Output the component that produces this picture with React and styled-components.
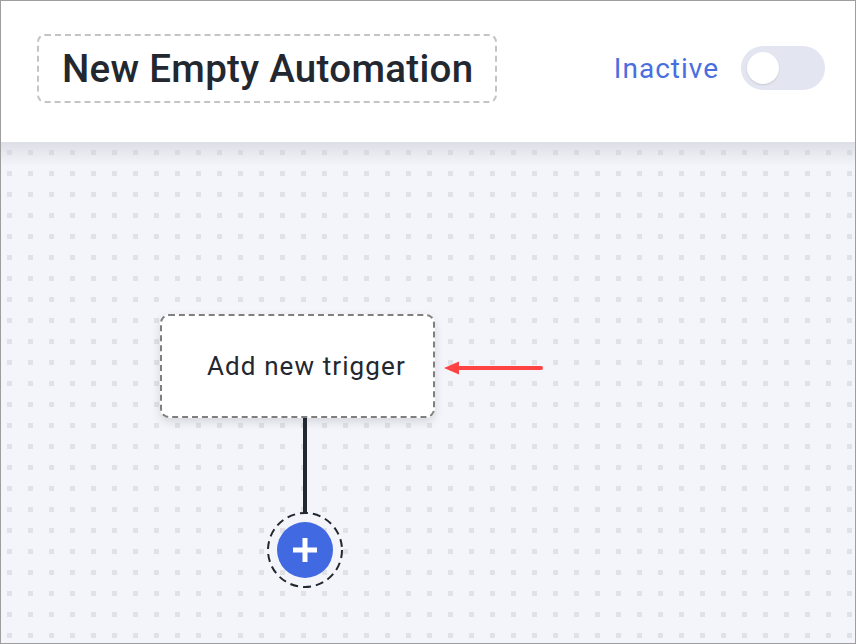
import React from 'react';
import styled, { createGlobalStyle } from 'styled-components';

const GlobalStyle = createGlobalStyle`
  * { box-sizing: border-box; }
  html, body { margin: 0; padding: 0; background: #ffffff; }
  body { font-family: Roboto, "Liberation Sans", sans-serif; }
`;

const Frame = styled.div`
  width: 856px;
  height: 644px;
  border: 1px solid #9e9e9e;
  display: flex;
  flex-direction: column;
  overflow: hidden;
  background: #ffffff;
`;

const Header = styled.header`
  height: 141px;
  flex-shrink: 0;
  display: flex;
  align-items: center;
  justify-content: space-between;
  padding: 0 30px 7px 36px;
  background: #ffffff;
  position: relative;
  z-index: 1;
`;

const TitleBox = styled.div`
  border: 2px dashed #c4c4c4;
  border-radius: 8px;
  height: 69px;
  padding: 0 22px 0 23px;
  display: flex;
  align-items: center;
  font-size: 38.5px;
  font-weight: 500;
  color: #23272f;
  letter-spacing: 0.3px;
`;

const StatusGroup = styled.div`
  display: flex;
  align-items: center;
  gap: 22px;
`;

const StatusLabel = styled.span`
  font-size: 28px;
  color: #4a6ee0;
  letter-spacing: 1px;
`;

const Toggle = styled.div`
  width: 84px;
  height: 44px;
  border-radius: 22px;
  background: #e3e5f0;
  padding: 6px;
  display: flex;
  align-items: center;
  justify-content: ${({ $on }) => ($on ? 'flex-end' : 'flex-start')};
`;

const Knob = styled.div`
  width: 32px;
  height: 32px;
  border-radius: 50%;
  background: #ffffff;
  box-shadow: 0 1px 2px rgba(0, 0, 0, 0.12);
`;

const Canvas = styled.main`
  flex: 1;
  position: relative;
  background:
    linear-gradient(to bottom, rgba(198, 200, 210, 0.5), rgba(198, 200, 210, 0) 24px) no-repeat,
    conic-gradient(from 0deg at 5px 5px, #f4f5fa 0 75%, #e1e2e8 0) 0 0 / 21px 21px;
  background-position: 0 0, 6px 8px;
`;

const TriggerCard = styled.div`
  position: absolute;
  left: 159px;
  top: 172px;
  width: 275px;
  height: 104px;
  background: #ffffff;
  border: 2px dashed #7f7f7f;
  border-radius: 9px;
  box-shadow: 0 4px 10px rgba(0, 0, 0, 0.12);
  display: flex;
  align-items: center;
  padding-left: 45px;
  font-size: 26px;
  color: #23272f;
  letter-spacing: 1.1px;
  cursor: pointer;
`;

const Connector = styled.div`
  position: absolute;
  left: 302px;
  top: 276px;
  width: 4px;
  height: 96px;
  background: #222831;
`;

const AddRing = styled.div`
  position: absolute;
  left: 265px;
  top: 369px;
  width: 78px;
  height: 78px;
  border-radius: 50%;
  display: flex;
  align-items: center;
  justify-content: center;
`;

const AddButton = styled.button`
  width: 56px;
  height: 56px;
  border-radius: 50%;
  border: none;
  padding: 0;
  background: #4169e1;
  display: flex;
  align-items: center;
  justify-content: center;
  cursor: pointer;
  position: relative;
`;

const Pointer = styled.svg`
  position: absolute;
  left: 441px;
  top: 216px;
`;

export default function App() {
  return (
    <>
      <GlobalStyle />
      <Frame>
        <Header>
          <TitleBox>New Empty Automation</TitleBox>
          <StatusGroup>
            <StatusLabel>Inactive</StatusLabel>
            <Toggle $on={false}>
              <Knob />
            </Toggle>
          </StatusGroup>
        </Header>
        <Canvas>
          <TriggerCard>Add new trigger</TriggerCard>
          <Connector />
          <AddRing>
            <svg width="78" height="78" viewBox="0 0 78 78" style={{ position: 'absolute', inset: 0 }}>
              <circle cx="39" cy="39" r="37" fill="none" stroke="#222831" strokeWidth="2" strokeDasharray="8 5" />
            </svg>
            <AddButton aria-label="Add step">
              <svg width="28" height="28" viewBox="0 0 28 28">
                <path d="M14 2v24M2 14h24" stroke="#ffffff" strokeWidth="5" />
              </svg>
            </AddButton>
          </AddRing>
          <Pointer width="104" height="20" viewBox="0 0 104 20">
            <path d="M2 10 L17 3.5 L17 16.5 Z" fill="#ff4343" />
            <path d="M15 10 H99" stroke="#ff4343" strokeWidth="4" strokeLinecap="round" />
          </Pointer>
        </Canvas>
      </Frame>
    </>
  );
}
